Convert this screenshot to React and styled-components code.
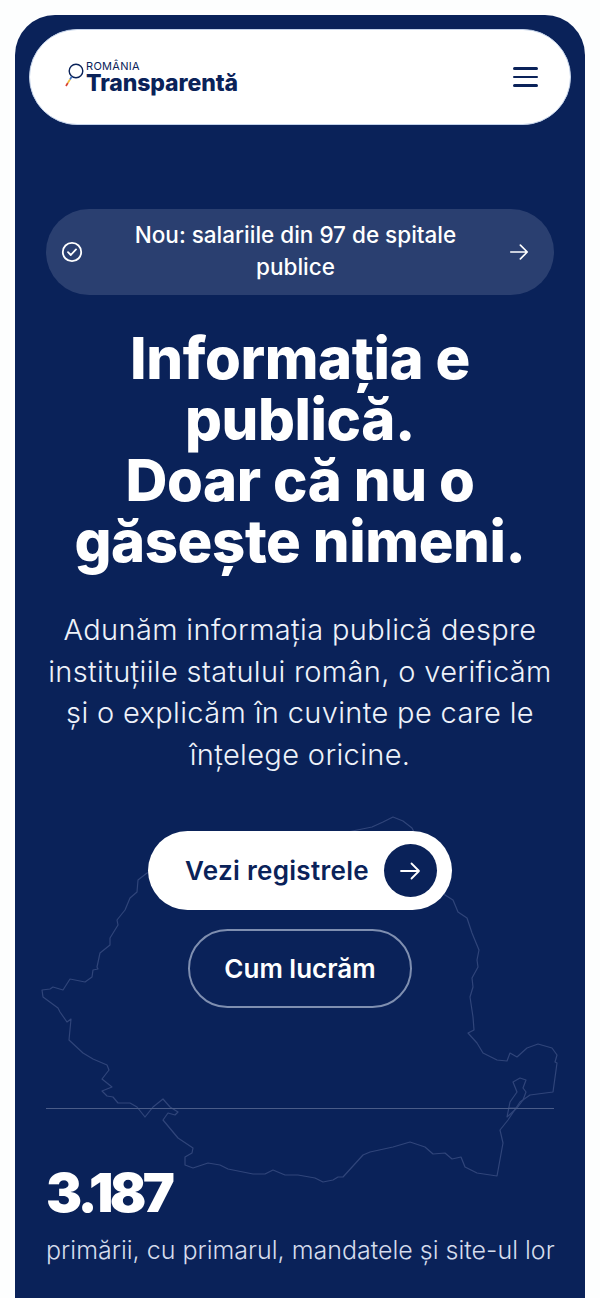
import styled, { createGlobalStyle } from "styled-components";

const GlobalStyle = createGlobalStyle`
  html, body {
    margin: 0;
    background: #fdfefe;
    overflow: hidden;
  }
  * { box-sizing: border-box; }
`;

const Page = styled.div`
  height: 1298px;
  padding: 15px 15px 0;
  font-family: Inter, "Open Sans", sans-serif;
`;

const Panel = styled.main`
  position: relative;
  height: 100%;
  padding: 14px 14px 0;
  background: #0a2259;
  border-radius: 40px 40px 0 0;
  color: #fff;
`;

const MapOutline = styled.svg`
  position: absolute;
  left: -15px;
  top: -15px;
  width: 600px;
  height: 1298px;
  fill: none;
  stroke: #30457a;
  stroke-width: 1.2;
  stroke-linejoin: round;
`;

const Header = styled.header`
  position: relative;
  display: flex;
  align-items: center;
  justify-content: space-between;
  height: 96px;
  padding: 0 32px 0 33px;
  background: #fff;
  border: 1px solid #c4d3ea;
  border-radius: 48px;
`;

const Logo = styled.a`
  display: flex;
  align-items: flex-start;
  color: #0a2259;
`;

const LogoText = styled.div`
  display: flex;
  flex-direction: column;
  margin-left: -1px;
`;

const LogoSmall = styled.span`
  font-size: 11px;
  line-height: 11px;
  letter-spacing: 0.3px;
`;

const LogoBig = styled.span`
  font-size: 23px;
  line-height: 22px;
  font-weight: 800;
  letter-spacing: -0.1px;
`;

const Hamburger = styled.button`
  display: flex;
  flex-direction: column;
  gap: 6px;
  width: 25px;
  padding: 0;
  background: none;
  border: 0;

  span {
    height: 2.4px;
    border-radius: 2px;
    background: #0a2259;
  }
`;

const Hero = styled.section`
  position: relative;
  padding: 84px 17px 0;
  text-align: center;
`;

const Notice = styled.a`
  display: flex;
  align-items: center;
  justify-content: space-between;
  height: 86px;
  padding: 0 24px 0 15px;
  background: #2a3f70;
  border-radius: 43px;
`;

const NoticeText = styled.span`
  flex: 1;
  padding: 0 30px 3px;
  font-size: 22.5px;
  line-height: 32px;
  font-weight: 500;
`;

const Title = styled.h1`
  margin: 33px 0 0;
  font-size: 58px;
  line-height: 61px;
  font-weight: 800;
  letter-spacing: -0.4px;
`;

const Lead = styled.p`
  margin: 37px -4px 0;
  font-size: 29px;
  line-height: 41.6px;
  font-weight: 300;
  letter-spacing: 0.35px;
  color: #eef2fa;
`;

const Actions = styled.div`
  display: flex;
  flex-direction: column;
  align-items: center;
  gap: 19px;
  margin-top: 56px;
`;

const PrimaryButton = styled.a`
  display: flex;
  align-items: center;
  gap: 15px;
  height: 79px;
  padding: 0 15px 0 37px;
  background: #fff;
  color: #0a2259;
  border-radius: 40px;
  font-size: 26px;
  font-weight: 600;
  letter-spacing: 0.3px;
`;

const ArrowCircle = styled.span`
  display: flex;
  align-items: center;
  justify-content: center;
  width: 53px;
  height: 53px;
  border-radius: 50%;
  background: #0a2259;
  color: #fff;
`;

const SecondaryButton = styled.a`
  display: flex;
  align-items: center;
  height: 79px;
  padding: 0 34px;
  border: 2px solid #7f8fb0;
  border-radius: 40px;
  font-size: 26px;
  font-weight: 600;
`;

const Stats = styled.div`
  margin-top: 100px;
  padding-top: 51px;
  border-top: 1px solid #4a5c88;
  text-align: left;
`;

const StatValue = styled.div`
  font-size: 54px;
  line-height: 66px;
  font-weight: 900;
  letter-spacing: -3.6px;
`;

const StatLabel = styled.div`
  margin-top: 8px;
  font-size: 25px;
  line-height: 32px;
  font-weight: 300;
  color: #d5dcec;
  white-space: nowrap;
`;

const Arrow = ({ size }) => (
  <svg width={size} height={size} viewBox="0 0 24 24" fill="none" stroke="currentColor" strokeWidth="1.8" strokeLinecap="round" strokeLinejoin="round">
    <path d="M3 12h18M13.5 4.5 21 12l-7.5 7.5" />
  </svg>
);

// traced clockwise from the northern tip; the stretch under the buttons never shows
const MAP_PATH =
  "M372 827L383 822 393 817 403 821 412 828 445 895 453 900 458 912 467 918 472 933 479 950 477 960 478 967 472 978 473 987 470 997 473 1017 474 1030 468 1033 477 1043 483 1053 497 1060 507 1061 510 1053 517 1057 527 1048 538 1044 552 1048 557 1055 555 1062 557 1063 553 1092 530 1095 520 1102 508 1120 500 1130 503 1143 497 1176 477 1173 465 1167 461 1157 452 1159 445 1153 433 1154 425 1147 410 1142 393 1147 370 1152 363 1155 343 1177 338 1177 333 1180 323 1182 315 1178 298 1175 285 1175 273 1170 265 1174 253 1174 228 1169 220 1165 208 1163 193 1168 185 1165 185 1157 192 1153 193 1148 178 1138 173 1132 163 1120 168 1113 175 1115 178 1112 170 1107 163 1099 153 1107 145 1117 137 1107 130 1103 118 1103 113 1097 107 1096 102 1091 112 1087 102 1079 109 1070 107 1065 93 1059 83 1053 69 1040 71 1019 67 1022 60 1012 58 1008 43 997 42 990 50 989 53 987 63 990 70 979 85 982 92 977 93 970 98 969 97 967 100 953 110 945 110 938 118 925 117 920 125 910 130 898 137 892 138 880 147 873 372 827Z";
const DELTA_PATH = "M508 1108L517 1108 523 1100 526 1092 523 1088 526 1080 520 1078 513 1082 517 1092 510 1102 507 1117 517 1108";

export default function App() {
  return (
    <Page>
      <GlobalStyle />
      <Panel>
        <MapOutline viewBox="0 0 600 1298" aria-hidden="true">
          <path d={MAP_PATH} />
          <path d={DELTA_PATH} />
        </MapOutline>
        <Header>
          <Logo>
            <svg width="24" height="30" viewBox="0 0 24 30" fill="none">
              <circle cx="13" cy="10" r="6.8" stroke="#0a2259" strokeWidth="1.4" />
              <path d="M8.7 15.6 7 18.5" stroke="#3a6fc0" strokeWidth="1.7" />
              <path d="M7 18.5 4.8 22" stroke="#edbe3c" strokeWidth="1.7" />
              <path d="M4.8 22 3 25" stroke="#d8402f" strokeWidth="1.7" />
            </svg>
            <LogoText>
              <LogoSmall>ROMÂNIA</LogoSmall>
              <LogoBig>Transparentă</LogoBig>
            </LogoText>
          </Logo>
          <Hamburger aria-label="Meniu">
            <span />
            <span />
            <span />
          </Hamburger>
        </Header>
        <Hero>
          <Notice>
            <svg width="22" height="22" viewBox="0 0 22 22" fill="none" stroke="#fff" strokeWidth="1.8" strokeLinecap="round" strokeLinejoin="round">
              <circle cx="11" cy="11" r="9.2" />
              <path d="m7 11.2 2.8 2.8 5.2-5.6" />
            </svg>
            <NoticeText>Nou: salariile din 97 de spitale publice</NoticeText>
            <Arrow size={22} />
          </Notice>
          <Title>
            Informația e publică.
            <br />
            Doar că nu o găsește nimeni.
          </Title>
          <Lead>
            Adunăm informația publică despre instituțiile statului român, o verificăm și o explicăm în cuvinte pe care le înțelege oricine.
          </Lead>
          <Actions>
            <PrimaryButton>
              Vezi registrele
              <ArrowCircle>
                <Arrow size={24} />
              </ArrowCircle>
            </PrimaryButton>
            <SecondaryButton>Cum lucrăm</SecondaryButton>
          </Actions>
          <Stats>
            <StatValue>3.187</StatValue>
            <StatLabel>primării, cu primarul, mandatele și site-ul lor</StatLabel>
          </Stats>
        </Hero>
      </Panel>
    </Page>
  );
}
